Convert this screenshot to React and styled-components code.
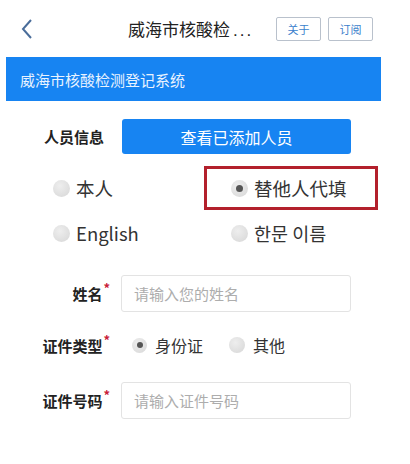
import React from 'react';
import styled, { createGlobalStyle } from 'styled-components';

const GlobalStyle = createGlobalStyle`
  body {
    margin: 0;
    background: #fff;
    font-family: "Noto Sans CJK SC", "Noto Sans", sans-serif;
  }
`;

const Page = styled.div`
  width: 410px;
  height: 464px;
  overflow: hidden;
  background: #fff;
`;

const Header = styled.div`
  display: flex;
  align-items: center;
  height: 57px;
  padding-left: 20px;
  box-sizing: border-box;
`;

const BackButton = styled.div`
  display: flex;
  align-items: center;
  width: 108px;
`;

const Title = styled.div`
  font-size: 17px;
  color: #222;
  white-space: nowrap;
  width: 140px;
`;

const Dots = styled.span`
  font-family: "Liberation Sans", sans-serif;
  letter-spacing: 2px;
  margin-left: 3px;
`;

const SmallButton = styled.div`
  width: 45px;
  height: 24px;
  box-sizing: border-box;
  border: 1px solid #b9c1cc;
  border-radius: 2px;
  color: #3b7fcc;
  font-size: 11px;
  display: flex;
  align-items: center;
  justify-content: center;
  margin-left: ${(p) => p.$gap}px;
`;

const Banner = styled.div`
  margin: 0 29px 0 6px;
  height: 44px;
  background: #1784f2;
  color: #e9f3ff;
  font-size: 15px;
  display: flex;
  align-items: center;
  padding-left: 14px;
`;

const InfoRow = styled.div`
  display: flex;
  align-items: center;
  margin-top: 18px;
  padding-left: 44px;
`;

const InfoLabel = styled.div`
  font-size: 15px;
  font-weight: bold;
  color: #222;
  width: 78px;
`;

const BlueButton = styled.div`
  width: 229px;
  height: 35px;
  border-radius: 3px;
  background: #1784f2;
  color: #fff;
  font-size: 16px;
  display: flex;
  align-items: center;
  justify-content: center;
`;

const ChoiceGrid = styled.div`
  display: grid;
  grid-template-columns: 151px 174px;
  grid-auto-rows: 44px;
  row-gap: 1px;
  margin: 12px 0 0 53px;
`;

const ChoiceCell = styled.div`
  display: flex;
  align-items: center;
  box-sizing: border-box;
  border: 3px solid ${(p) => (p.$highlight ? '#b3202c' : 'transparent')};
  padding-left: ${(p) => (p.$right ? 24 : 0)}px;
  margin-left: ${(p) => (p.$right ? 0 : -3)}px;
`;

const Radio = styled.span`
  display: inline-flex;
  align-items: center;
  justify-content: center;
  flex: none;
  width: ${(p) => p.$size}px;
  height: ${(p) => p.$size}px;
  border-radius: 50%;
  background: radial-gradient(circle at 40% 35%, #eeeeee, #d6d6d6);
  &::after {
    content: '';
    display: ${(p) => (p.$checked ? 'block' : 'none')};
    width: ${(p) => Math.round(p.$size * 0.42)}px;
    height: ${(p) => Math.round(p.$size * 0.42)}px;
    border-radius: 50%;
    background: #555;
  }
`;

const ChoiceText = styled.span`
  font-size: 18.5px;
  color: #333;
  margin-left: 6px;
  white-space: nowrap;
`;

const FormRow = styled.div`
  display: flex;
  align-items: center;
  height: ${(p) => p.$h}px;
  margin-top: ${(p) => p.$mt}px;
`;

const FieldLabel = styled.div`
  width: 112px;
  flex: none;
  display: flex;
  justify-content: flex-end;
  align-items: flex-start;
  font-size: 15px;
  font-weight: bold;
  color: #222;
  margin-right: 9px;
`;

const Star = styled.span`
  color: #c8203a;
  font-size: 13px;
  line-height: 1;
  margin: -2px 2px 0 1px;
`;

const TextInput = styled.div`
  width: 230px;
  height: 37px;
  box-sizing: border-box;
  border: 1px solid #e3e3e3;
  border-radius: 3px;
  padding-left: 12px;
  display: flex;
  align-items: center;
  color: #adadad;
  font-size: 15px;
`;

const InlineChoice = styled.div`
  display: flex;
  align-items: center;
  margin-left: ${(p) => p.$ml}px;
`;

const InlineText = styled.span`
  font-size: 16px;
  color: #333;
  margin-left: 8px;
`;

const Field = ({ label, children, h, mt }) => (
  <FormRow $h={h} $mt={mt}>
    <FieldLabel>
      {label}
      <Star>*</Star>
    </FieldLabel>
    {children}
  </FormRow>
);

export default function App() {
  return (
    <Page>
      <GlobalStyle />
      <Header>
        <BackButton>
          <svg width="14" height="22" viewBox="0 0 14 22">
            <path d="M11 2 L3 11 L11 20" fill="none" stroke="#4a6d9a" strokeWidth="2" />
          </svg>
        </BackButton>
        <Title>
          威海市核酸检<Dots>...</Dots>
        </Title>
        <SmallButton $gap={8}>关于</SmallButton>
        <SmallButton $gap={7}>订阅</SmallButton>
      </Header>
      <Banner>威海市核酸检测登记系统</Banner>
      <InfoRow>
        <InfoLabel>人员信息</InfoLabel>
        <BlueButton>查看已添加人员</BlueButton>
      </InfoRow>
      <ChoiceGrid>
        <ChoiceCell>
          <Radio $size={17} />
          <ChoiceText>本人</ChoiceText>
        </ChoiceCell>
        <ChoiceCell $right $highlight>
          <Radio $size={17} $checked />
          <ChoiceText>替他人代填</ChoiceText>
        </ChoiceCell>
        <ChoiceCell>
          <Radio $size={17} />
          <ChoiceText>English</ChoiceText>
        </ChoiceCell>
        <ChoiceCell $right>
          <Radio $size={17} />
          <ChoiceText>한문 이름</ChoiceText>
        </ChoiceCell>
      </ChoiceGrid>
      <Field label="姓名" h={37} mt={20}>
        <TextInput>请输入您的姓名</TextInput>
      </Field>
      <Field label="证件类型" h={30} mt={18}>
        <InlineChoice $ml={11}>
          <Radio $size={15} $checked />
          <InlineText>身份证</InlineText>
        </InlineChoice>
        <InlineChoice $ml={26}>
          <Radio $size={16} />
          <InlineText>其他</InlineText>
        </InlineChoice>
      </Field>
      <Field label="证件号码" h={36} mt={22}>
        <TextInput>请输入证件号码</TextInput>
      </Field>
    </Page>
  );
}
